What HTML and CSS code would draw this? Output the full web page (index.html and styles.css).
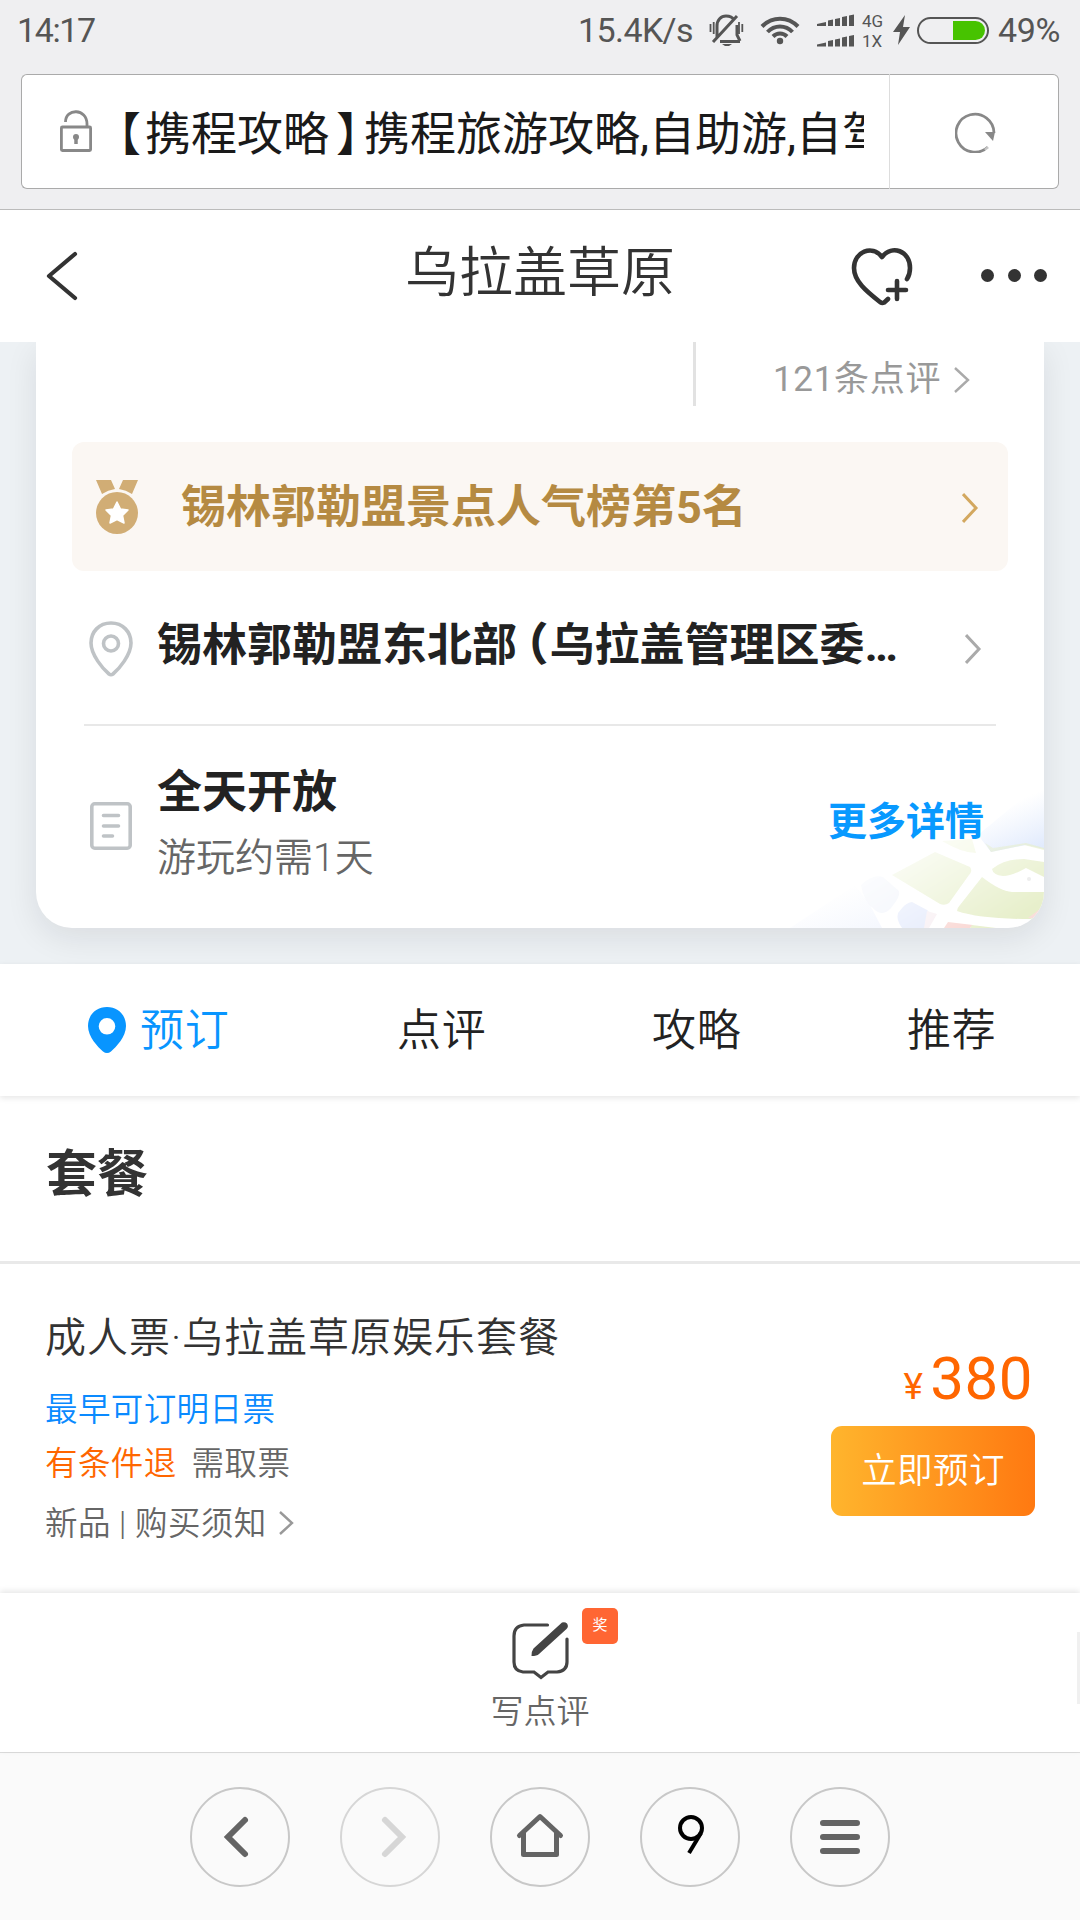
FILE: index.html
```html
<!DOCTYPE html>
<html lang="zh-CN">
<head>
<meta charset="utf-8">
<title>乌拉盖草原</title>
<link rel="stylesheet" href="styles.css">
</head>
<body>
<div class="screen">
  <div class="status">
    <span class="status-time">14:17</span>
    <span class="status-speed">15.4K/s</span>
    <svg class="ic-bell" width="36" height="34" viewBox="0 0 36 34" fill="none" stroke="#555" stroke-width="3">
      <path d="M8 23V12C8 6 12 2 17 2c4 0 7 2 8 4M28 11v10l3 6M11 27.500h20M4 28 28 2"/>
      <path d="M1.500 10v8M4.700 8v12M30 8v12M33.300 10v8" stroke-width="1.800"/>
      <path d="M13 30h10l-3 2h-4z" fill="#555" stroke="none"/>
    </svg>
    <svg class="ic-wifi" width="40" height="30" viewBox="0 0 40 30" fill="none" stroke="#555" stroke-width="4">
      <path d="M2 11.500C12 1 28 1 38 11.500M7.500 17c7-7.500 18-7.500 25 0M13 21.500c4-4 10-4 14 0"/>
      <circle cx="20" cy="26" r="3.200" fill="#555" stroke="none"/>
    </svg>
    <svg class="ic-signal" width="38" height="33" viewBox="0 0 38 33" fill="#555">
      <path id="bars" d="M0 12V10l9-2v4zM11 12V6.500l5-1V12zM18 12V5l5-1v8zM25 12V3l5-1v10zM32 12V1.500l5-1V12z"/>
      <use href="#bars" y="20.500"/>
    </svg>
    <div class="net"><span>4G</span><span>1X</span></div>
    <svg class="ic-bolt" width="17" height="30" viewBox="0 0 17 30" fill="#555"><path d="M12 0 0 17h7L5 30 17 12h-7z"/></svg>
    <div class="battery"><div class="battery-level"></div></div>
    <span class="status-pct">49%</span>
  </div>

  <div class="urlbar">
    <div class="url-main">
      <svg width="32" height="42" viewBox="0 0 32 42" fill="none" stroke="#888" stroke-width="2.800">
        <path d="M5.500 12C5.500-2 27-2 27 14v3"/>
        <rect x="1.400" y="17" width="29.200" height="23.500" rx="1"/>
        <path d="M16 27v7" stroke-width="3.500"/><circle cx="16" cy="27" r="3" fill="#888" stroke="none"/>
      </svg>
      <div class="url-text"><span class="br-l">【</span>携程攻略<span class="br-r">】</span>携程旅游攻略,自助游,自驾游</div>
    </div>
    <div class="url-reload">
      <svg width="42" height="42" viewBox="0 0 42 42" fill="none" stroke="#888" stroke-width="2.800">
        <path d="M33 36A19 19 0 1 1 39 22"/><path d="M30 21h10l-2 9z" fill="#888" stroke="none"/>
        <path d="M30 39l7-6" stroke="#fff" stroke-opacity=".5"/>
      </svg>
    </div>
  </div>

  <div class="header">
    <svg class="ic-back" width="32" height="50" viewBox="0 0 32 50" fill="none" stroke="#333" stroke-width="4.200" stroke-linecap="round" stroke-linejoin="round"><path d="M29 3 3 25l26 22"/></svg>
    <h1>乌拉盖草原</h1>
    <svg class="ic-heart" width="62" height="60" viewBox="0 0 62 60" fill="none" stroke="#333" stroke-width="4.600" stroke-linecap="round" stroke-linejoin="round">
      <path d="M37 52c-4 4-5 5-8 3C15 44 3 34 3 21 3 5 21-3 31 10 41-3 59 4 59 21c0 4-1 8-3 11"/>
      <path d="M46 34v18M37 43h18"/>
    </svg>
    <div class="dots"><i></i><i></i><i></i></div>
  </div>

  <div class="hero">
    <div class="card">
      <svg class="map" width="254" height="148" viewBox="790 780 254 148">
        <defs>
          <linearGradient id="fade" gradientUnits="userSpaceOnUse" x1="905" y1="835" x2="975" y2="945"><stop offset="0" stop-color="#fff" stop-opacity=".1"/><stop offset="1" stop-color="#fff"/></linearGradient>
          <linearGradient id="sky" gradientUnits="userSpaceOnUse" x1="1008" y1="805" x2="1030" y2="855"><stop offset="0" stop-color="#e3ecfd" stop-opacity="0"/><stop offset="1" stop-color="#dfe9fc"/></linearGradient>
          <linearGradient id="low" gradientUnits="userSpaceOnUse" x1="840" y1="890" x2="860" y2="940"><stop offset="0" stop-color="#f4f7fe" stop-opacity="0"/><stop offset="1" stop-color="#f4f7fe"/></linearGradient>
          <mask id="m"><rect x="790" y="780" width="254" height="148" fill="url(#fade)"/></mask>
        </defs>
        <path d="M978 835 1044 780v69l-18-4-35 7z" fill="url(#sky)"/>
        <path d="M790 928 855 885l15 20 12 23z" fill="url(#low)"/>
        <g mask="url(#m)">
          <path d="M892 875 935 852l35 15q3 4-1 8l-20 28q-4 3-9 1z" fill="#e8f0cd"/>
          <path d="M942 841l30-2 4 14q-14 0-34-12z" fill="#eff5d8"/>
          <path d="M985 843l6 9 33-7 20 5v-2l-18-5-33 5z" fill="#e7efcb"/>
          <path d="M992 869q12-10 32-10l20 3v15l-18-9q-14 8-23 8-10-1-11-7z" fill="#e7efcb"/>
          <path d="M982 877q18 14 30 15h32v24l-14 3q-50 0-73-8 0-3 3-6z" fill="#e7efcb"/>
          <path d="M861 885q12-11 22-8l16 14q2 5-8 17-7 8-15 3-13-10-15-26z" fill="#edf1fa"/>
          <path d="M898 913q8-11 14-11l15 8q5 3 1 18h-26q-6-8-4-15z" fill="#e1e8fb"/>
          <path d="M927 911l10 3-8 14h-5z" fill="#f7eef2"/>
          <path d="M948 922l25 3-3 3h-26z" fill="#f9d5d1"/>
          <path d="M972 925l24 3h-26z" fill="#e7efcb"/>
          <path d="M1028 918l16-12v12z" fill="#f9dedb"/>
        </g>
        <circle cx="1029" cy="879" r="2" fill="#eee"/>
      </svg>
      <div class="reviews"><div class="vline"></div><span>121条点评</span>
        <svg width="16" height="26" viewBox="0 0 16 26" fill="none" stroke="#aaa" stroke-width="2.400"><path d="M1 1l13 12L1 25"/></svg></div>
      <div class="rank">
        <svg width="42" height="54" viewBox="0 0 42 54" fill="#d1ad75">
          <path d="M0 0h15l4 9q-7 1-13 5zM27 0h15l-6 14q-6-4-13-5z"/><circle cx="21" cy="33" r="21"/>
          <path d="M21 22l3.500 7 7.500 1-5.500 5.500 1.500 7.500-7-3.500-7 3.500 1.500-7.500L10 30l7.500-1z" fill="#fff" stroke="#fff" stroke-width="1.500" stroke-linejoin="round"/>
        </svg>
        <span>锡林郭勒盟景点人气榜第5名</span>
        <svg width="17" height="32" viewBox="0 0 17 32" fill="none" stroke="#d3a85f" stroke-width="3"><path d="M1 2l13 14L1 30"/></svg>
      </div>
      <div class="addr">
        <svg width="44" height="56" viewBox="0 0 44 56" fill="none" stroke="#bfc3c6" stroke-width="3.600" stroke-linejoin="round">
          <path d="M22 2C10 2 2 11 2 22c0 12 12 26 18 31q2 1.500 4 0c6-5 18-19 18-31C42 11 34 2 22 2z"/><circle cx="22" cy="22.500" r="7.500"/>
        </svg>
        <span>锡林郭勒盟东北部<b class="paren">（</b>乌拉盖管理区委…</span>
        <svg width="17" height="32" viewBox="0 0 17 32" fill="none" stroke="#aaa" stroke-width="3"><path d="M1 2l13 14L1 30"/></svg>
      </div>
      <div class="open">
        <svg width="42" height="48" viewBox="0 0 42 48" fill="none" stroke="#bfc3c6" stroke-width="3.600"><rect x="1.800" y="1.800" width="38.400" height="44.400" rx="3"/><path d="M13.500 13.500h15M13.500 24h15M13.500 34h9" stroke-linecap="round"/></svg>
        <div class="open-text"><div class="open-title">全天开放</div><div class="open-sub">游玩约需1天</div></div>
        <span class="more">更多详情</span>
      </div>
    </div>
  </div>

  <div class="tabs">
    <div class="tab active"><svg width="38" height="46" viewBox="0 0 38 46"><path fill-rule="evenodd" fill="#0895ff" d="M19 0C8 0 0 8 0 19c0 11 10 21 15 25.500q4 3 8 0C28 40 38 30 38 19 38 8 30 0 19 0zm0 11a8.300 8.300 0 1 1 0 16.600 8.300 8.300 0 0 1 0-16.600z"/></svg><span>预订</span></div>
    <div class="tab">点评</div>
    <div class="tab">攻略</div>
    <div class="tab">推荐</div>
  </div>

  <h2 class="section">套餐</h2>

  <div class="item">
    <div class="item-info">
      <div class="item-title">成人票·乌拉盖草原娱乐套餐</div>
      <div class="item-early">最早可订明日票</div>
      <div class="item-tags"><span class="refund">有条件退</span><span>需取票</span></div>
      <div class="item-note"><span>新品 | 购买须知</span><svg width="15" height="24" viewBox="0 0 15 24" fill="none" stroke="#999" stroke-width="2.400"><path d="M1 1l12 11L1 23"/></svg></div>
    </div>
    <div class="item-buy">
      <div class="price"><small>¥</small>380</div>
      <div class="book">立即预订</div>
    </div>
  </div>

  <div class="write">
    <div class="write-icon">
      <svg width="58" height="60" viewBox="0 0 58 60" fill="none" stroke="#444" stroke-width="3.200" stroke-linecap="round">
        <path d="M35.500 4H12Q2 5 2 15v26q0 9 9 10h11l7 5.500 7-5.500h9q10-1 10-10V18"/>
        <path d="M50 1.500q3-1 5 1 2 3-.5 5.500L27 33q-2 2-7.500 2 0-5 2-7.500z" fill="#444" stroke="none"/>
      </svg>
      <span class="badge">奖</span>
    </div>
    <div class="write-label">写点评</div>
    <div class="scroll"></div>
  </div>

  <div class="nav">
    <div class="btn"><svg width="50" height="50" viewBox="0 0 50 50" fill="none" stroke="#646464" stroke-width="6" stroke-linecap="round"><path d="M30 8 13 25l17 17"/></svg></div>
    <div class="btn off"><svg width="50" height="50" viewBox="0 0 50 50" fill="none" stroke="#d6d6d6" stroke-width="6" stroke-linecap="round"><path d="M20 8l17 17-17 17"/></svg></div>
    <div class="btn"><svg width="50" height="50" viewBox="0 0 50 50" fill="none" stroke="#646464" stroke-width="5" stroke-linecap="round" stroke-linejoin="round"><path d="M4.500 23.500 25 4.500l20.500 19M8.500 21v21.500h33V21"/></svg></div>
    <div class="btn"><svg width="50" height="50" viewBox="0 0 50 50" fill="none" stroke="#000" stroke-width="4"><circle cx="26" cy="16" r="11"/><path d="M36 21 24 41"/></svg></div>
    <div class="btn"><svg width="50" height="50" viewBox="0 0 50 50" stroke="#646464" stroke-width="6" stroke-linecap="round"><path d="M8 11h34M8 25h34M8 39h34"/></svg></div>
  </div>
</div>
</body>
</html>
```
FILE: styles.css
```css
* { box-sizing: border-box; margin: 0; padding: 0; }
body { background: #fff; font-family: Roboto, "Noto Sans CJK SC", sans-serif; color: #222; }
svg { display: block; flex: none; }
span, h1, h2 { white-space: nowrap; }
.screen { width: 1080px; height: 1920px; overflow: hidden; display: flex; flex-direction: column; }
.screen > * { flex: none; }

.status { height: 74px; background: #efeff1; display: flex; align-items: flex-start; padding: 0 0 0 17px; color: #555; font-size: 34px; line-height: 60px; }
.status-time { width: 561px; letter-spacing: -1.400px; }
.status-speed { width: 131px; letter-spacing: -.6px; }
.ic-bell { margin-top: 14px; }
.ic-wifi { margin: 15px 0 0 15px; }
.ic-signal { margin: 14px 0 0 17px; }
.net { margin: 11px 0 0 7px; width: 31px; display: flex; flex-direction: column; font-size: 17px; line-height: 20px; }
.ic-bolt { margin-top: 15px; }
.battery { width: 72px; height: 27px; margin: 17px 0 0 7px; border: 2px solid #555; border-radius: 14px; padding: 2px 2px 2px 34px; }
.battery-level { height: 19px; width: 32px; background: #47c300; border-radius: 0 10px 10px 0; }
.status-pct { margin-left: 9px; letter-spacing: -.4px; }

.urlbar { height: 136px; background: #efeff1; border-bottom: 1px solid #bbb; padding: 0 21px 20px; display: flex; }
.url-main { width: 869px; border: 1px solid #aaa; border-right-color: #ddd; border-radius: 6px 0 0 6px; background: #fff; display: flex; align-items: flex-start; padding: 35px 25px 0 38px; }
.url-text { flex: 1; margin: -8px 0 0 18px; overflow: hidden; white-space: nowrap; font-size: 46px; line-height: 64px; color: #1a1a1a; }
.br-l, .br-r, .paren { font-feature-settings: "halt"; }
.br-l { margin: 0 4px 0 8px; }
.br-r { margin: 0 5px 0 7px; }
.url-reload { flex: 1; border: 1px solid #aaa; border-left: 0; border-radius: 0 6px 6px 0; background: #fff; padding: 36px 0 0 65px; }

.header { height: 132px; display: flex; align-items: flex-start; padding: 0 33px 0 46px; }
.ic-back { margin-top: 41px; }
.header h1 { width: 270px; margin: 24px 176px 0 327px; font-size: 54px; line-height: 80px; font-weight: 350; color: #333; }
.ic-heart { margin-top: 37px; }
.dots { display: flex; gap: 13.500px; margin: 59px 0 0 68px; }
.dots i { width: 13px; height: 13px; border-radius: 50%; background: #333; }

.hero { height: 622px; background: #edf1f4; padding: 0 36px; overflow: hidden; }
.card { position: relative; height: 586px; background: #fff; border-radius: 0 0 36px 36px; box-shadow: 0 10px 32px rgba(20,20,30,.09); overflow: visible; }
.map { position: absolute; right: 0; bottom: 0; border-radius: 0 0 36px 0; }
.reviews { height: 100px; display: flex; padding-left: 657px; color: #999; font-size: 35px; line-height: 76px; letter-spacing: .7px; }
.vline { width: 3px; height: 64px; background: #e2e2e2; margin-right: 77px; }
.reviews svg { margin: 25px 0 0 13px; }
.rank { height: 129px; margin: 0 36px; background: #fbf7f3; border-radius: 12px; display: flex; padding-left: 24px; color: #b58a42; font-size: 45px; line-height: 64px; font-weight: 700; }
.rank svg:first-child { margin-top: 38px; }
.rank span { width: 781px; margin: 34px 0 0 43px; }
.rank svg:last-child { margin-top: 50px; }
.addr { height: 155px; margin: 0 48px; padding-left: 5px; border-bottom: 2px solid #e8e8e8; display: flex; font-size: 45px; line-height: 64px; font-weight: 700; }
.addr svg:first-child { margin-top: 50px; }
.addr span { width: 808px; margin: 43px 0 0 24px; }
.addr svg:last-child { margin-top: 62px; }
.paren { margin: 0 1px 0 9px; }
.open { position: relative; margin: 0 60px 0 54px; display: flex; }
.open > svg { margin-top: 76px; }
.open-text { width: 673px; margin-left: 25px; padding-top: 35px; }
.open-title { font-size: 45px; line-height: 64px; font-weight: 700; }
.open-sub { font-size: 39px; line-height: 60px; margin-top: 3px; color: #666; font-weight: 350; }
.more { margin-top: 66px; font-size: 39px; line-height: 60px; font-weight: 700; color: #0899ff; }

.tabs { position: relative; height: 132px; display: flex; justify-content: space-between; padding: 0 83px 0 88px; font-size: 44px; line-height: 134px; letter-spacing: .8px; font-weight: 350; box-shadow: 0 2px 6px rgba(0,0,0,.1); }
.tab { display: flex; width: 90px; }
.tab.active { width: 144px; color: #0895ff; }
.tab svg { margin: 43px 14px 0 0; }
.section { height: 168px; padding-left: 46px; font-size: 51px; line-height: 157px; color: #333; border-bottom: 3px solid #e9e9e9; }

.item { height: 329px; display: flex; justify-content: space-between; padding: 0 45px; color: #666; }
.item-info { padding-top: 43px; font-size: 32.500px; letter-spacing: .4px; line-height: 50px; font-weight: 350; }
.item-title { font-size: 41px; line-height: 62px; letter-spacing: 1px; color: #333; }
.item-early { margin-top: 16px; color: #0a8aff; }
.item-tags { display: flex; gap: 15px; margin-top: 4px; }
.refund { color: #ff6600; }
.item-note { display: flex; margin-top: 10px; }
.item-note svg { margin: 12px 0 0 12px; }
.item-buy { width: 204px; }
.price { height: 75px; margin-top: 77px; padding-right: 2px; text-align: right; font-size: 60px; line-height: 75px; color: #ff6600; letter-spacing: .5px; }
.price small { font-size: 37px; margin-right: 7px; }
.book { height: 90px; margin-top: 10px; border-radius: 11px; background: linear-gradient(90deg, #ffb52d, #ff7911); color: #fff; text-align: center; font-size: 35.500px; line-height: 91px; letter-spacing: .4px; font-weight: 350; }

.write { position: relative; height: 159px; background: #fff; box-shadow: 0 -2px 6px rgba(0,0,0,.1); display: flex; flex-direction: column; align-items: center; }
.write-icon { position: relative; margin: 28px 0 0 2px; width: 58px; height: 60px; }
.badge { position: absolute; left: 70px; top: -13px; width: 36px; height: 36px; border-radius: 5px; background: #ff6633; color: #fff; font-size: 15px; line-height: 34px; text-align: center; }
.write-label { margin-top: 6px; font-size: 33px; line-height: 50px; color: #666; font-weight: 350; }
.scroll { position: absolute; right: 0; top: 39px; width: 3px; height: 72px; background: #f0f0f0; }

.nav { height: 168px; background: #fafafa; border-top: 1px solid #ddd; display: flex; gap: 50px; padding: 34px 190px 0; }
.btn { width: 100px; height: 100px; border: 2px solid #c8c8c8; border-radius: 50%; display: flex; align-items: center; justify-content: center; }
.off { border-color: #d6d6d6; }
```
